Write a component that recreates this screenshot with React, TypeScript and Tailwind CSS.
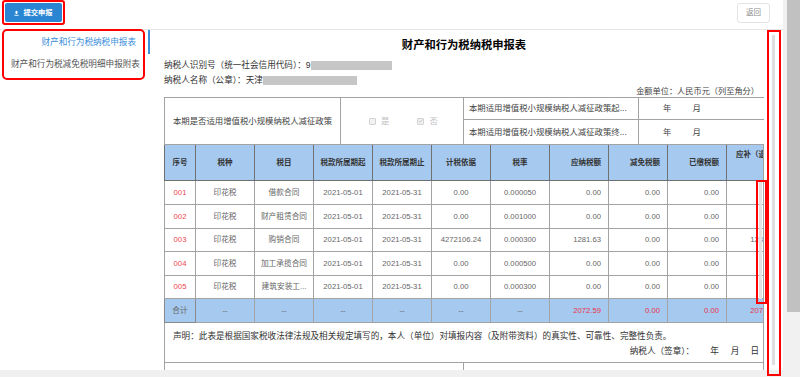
import React from 'react';

const F = "font-['Liberation_Sans','Noto_Sans_CJK_SC',sans-serif]";

type Row = { no: string; item: string; base: string; rate: string; due: string; sup: string };
const rows: Row[] = [
  { no: '001', item: '借款合同', base: '0.00', rate: '0.000050', due: '0.00', sup: '0.00' },
  { no: '002', item: '财产租赁合同', base: '0.00', rate: '0.001000', due: '0.00', sup: '0.00' },
  { no: '003', item: '购销合同', base: '4272106.24', rate: '0.000300', due: '1281.63', sup: '1281.63' },
  { no: '004', item: '加工承揽合同', base: '0.00', rate: '0.000500', due: '0.00', sup: '0.00' },
  { no: '005', item: '建筑安装工...', base: '0.00', rate: '0.000300', due: '0.00', sup: '0.00' },
];
const rowH = ['h-[24px]', 'h-[24px]', 'h-[23px]', 'h-[24px]', 'h-[23px]'];

function C({ children, className = '' }: { children?: React.ReactNode; className?: string }) {
  return (
    <div className={`w-[59px] shrink-0 border-r border-b border-[#a3a3a3] flex items-center justify-center whitespace-nowrap overflow-hidden ${className}`}>
      {children}
    </div>
  );
}
function R({ children, className = '' }: { children?: React.ReactNode; className?: string }) {
  return (
    <div className={`w-[59px] shrink-0 border-r border-b border-[#a3a3a3] flex items-center justify-end pr-[7px] whitespace-nowrap ${className}`}>
      {children}
    </div>
  );
}
function H({ children, className = '' }: { children?: React.ReactNode; className?: string }) {
  return (
    <div className={`w-[59px] shrink-0 border-r border-b border-[#707070] flex items-center justify-center whitespace-nowrap font-bold ${className}`}>
      {children}
    </div>
  );
}

function Box({ checked, label }: { checked?: boolean; label: string }) {
  return (
    <span className="flex items-center gap-[5px]">
      <span className="w-[7px] h-[7px] border border-[#d3d3d3] bg-[#f2f2f2] rounded-[1px] flex items-center justify-center">
        {checked && (
          <svg width="6" height="6" viewBox="0 0 6 6">
            <path d="M1 3 L2.5 4.5 L5 1.5" stroke="#b5b5b5" strokeWidth="0.9" fill="none" />
          </svg>
        )}
      </span>
      <span className="text-[#c0c0c0]">{label}</span>
    </span>
  );
}

export default function App() {
  return (
    <div className={`${F} w-[800px] h-[377px] relative overflow-hidden flex bg-white text-[#333]`}>
      {/* main column */}
      <div className="w-[783px] h-full flex flex-col">
        {/* top bar */}
        <div className="h-[30px] shrink-0 border-b border-[#e6e6e6] flex items-start justify-between">
          <button className="ml-[5px] mt-[3px] w-[57px] h-[19px] bg-[#2a86d3] rounded-[2px] flex items-center justify-center gap-[4px] text-white text-[7.3px] font-bold leading-none">
            <svg width="5" height="6" viewBox="0 0 5 6">
              <path d="M2.5 0.6 L0.6 2.6 H1.8 V4 H3.2 V2.6 H4.4 Z" fill="white" />
              <rect x="0.4" y="4.8" width="4.2" height="0.9" fill="white" />
            </svg>
            <span>提交申报</span>
          </button>
          <button className="mr-[13px] mt-[3px] w-[33px] h-[20px] border border-[#e3e3e3] rounded-[3px] text-[#8a8a8a] text-[7.5px] leading-none flex items-center justify-center">
            返回
          </button>
        </div>

        {/* body */}
        <div className="flex-1 flex min-h-0">
          {/* sidebar */}
          <div className="w-[150px] shrink-0 flex flex-col text-[8.6px] leading-none">
            <div className="h-[24px] flex items-center justify-end pr-[12px] text-[#3b8fdb] border-r-2 border-[#3b8fdb]">
              财产和行为税纳税申报表
            </div>
            <div className="h-[20px] flex items-center pl-[11px] text-[#555] whitespace-nowrap">
              财产和行为税减免税明细申报附表
            </div>
          </div>

          {/* content */}
          <div className="flex-1 pl-[14px] flex flex-col overflow-hidden relative">
            <div className="w-[600px] flex flex-col">
              <div className="mt-[7px] h-[16px] leading-[16px] text-center text-[11.3px] font-bold text-black font-['Liberation_Serif','Noto_Sans_CJK_SC',serif]">
                财产和行为税纳税申报表
              </div>
              <div className="mt-[5px] h-[15px] flex items-center text-[8.6px] leading-none text-[#333]">
                <span>纳税人识别号（统一社会信用代码）：9</span>
                <span className="inline-block w-[81px] h-[9px] bg-[#c6c6c6]" />
              </div>
              <div className="h-[14px] flex items-center text-[8.6px] leading-none text-[#333]">
                <span>纳税人名称（公章）：天津</span>
                <span className="inline-block w-[94px] h-[9px] bg-[#c6c6c6]" />
              </div>
              <div className="h-[10px] flex items-center justify-end pr-[5px] text-[8.2px] leading-none text-[#444]">
                金额单位：人民币元（列至角分）
              </div>

              {/* policy section */}
              <div className="flex h-[48px] border-t border-l border-[#a3a3a3] text-[8.4px] leading-none text-[#444]">
                <div className="w-[176px] shrink-0 border-r border-b border-[#a3a3a3] flex items-center pl-[8px] whitespace-nowrap">
                  本期是否适用增值税小规模纳税人减征政策
                </div>
                <div className="w-[123px] shrink-0 border-r border-b border-[#a3a3a3] flex items-center pl-[28px] gap-[28px]">
                  <Box label="是" />
                  <Box checked label="否" />
                </div>
                <div className="w-[175px] shrink-0 flex flex-col">
                  <div className="h-[22px] border-r border-b border-[#a3a3a3] flex items-center pl-[5px] whitespace-nowrap">
                    本期适用增值税小规模纳税人减征政策起...
                  </div>
                  <div className="flex-1 border-r border-b border-[#a3a3a3] flex items-center pl-[5px] whitespace-nowrap">
                    本期适用增值税小规模纳税人减征政策终...
                  </div>
                </div>
                <div className="w-[125px] shrink-0 flex flex-col">
                  <div className="h-[22px] border-b border-[#a3a3a3] flex items-center pl-[24px] gap-[21px]">
                    <span>年</span>
                    <span>月</span>
                  </div>
                  <div className="flex-1 border-b border-[#a3a3a3] flex items-center pl-[24px] gap-[21px]">
                    <span>年</span>
                    <span>月</span>
                  </div>
                </div>
              </div>

              {/* data table */}
              <div className="w-[600px] overflow-hidden border-r border-[#a3a3a3] relative">
                <div className="w-[622px] flex flex-col text-[7.7px] leading-none text-[#666]">
                  {/* header */}
                  <div className="flex h-[36px] bg-[#a6c9ef] text-[7.5px] text-[#333]">
                    <div className="w-[32px] shrink-0 border-l border-r border-b border-[#707070] flex items-center justify-center font-bold">序号</div>
                    <H>税种</H>
                    <H>税目</H>
                    <H>税款所属期起</H>
                    <H>税款所属期止</H>
                    <H>计税依据</H>
                    <H>税率</H>
                    <H className="justify-end pr-[7px]">应纳税额</H>
                    <H className="justify-end pr-[7px]">减免税额</H>
                    <H className="justify-end pr-[7px]">已缴税额</H>
                    <div className="w-[59px] shrink-0 border-r border-b border-[#707070] pl-[9px] pt-[6px] font-bold whitespace-nowrap">应补（退）税额</div>
                  </div>
                  {rows.map((r, i) => (
                    <div key={r.no} className={`flex ${rowH[i]}`}>
                      <div className="w-[32px] shrink-0 border-l border-r border-b border-[#a3a3a3] flex items-center justify-center text-[#f0484c]">{r.no}</div>
                      <C>印花税</C>
                      <C>{r.item}</C>
                      <C>2021-05-01</C>
                      <C>2021-05-31</C>
                      <C>{r.base}</C>
                      <C>{r.rate}</C>
                      <R>{r.due}</R>
                      <R>0.00</R>
                      <R>0.00</R>
                      <R>{r.sup}</R>
                    </div>
                  ))}
                  {/* total */}
                  <div className="flex h-[24px] bg-[#a6c9ef]">
                    <div className="w-[32px] shrink-0 border-l border-r border-b border-[#8a8a8a] flex items-center justify-center">合计</div>
                    <C className="border-[#8a8a8a]">--</C>
                    <C className="border-[#8a8a8a]">--</C>
                    <C className="border-[#8a8a8a]">--</C>
                    <C className="border-[#8a8a8a]">--</C>
                    <C className="border-[#8a8a8a]">--</C>
                    <C className="border-[#8a8a8a]">--</C>
                    <R className="border-[#8a8a8a] text-[#e8334a]">2072.59</R>
                    <R className="border-[#8a8a8a] text-[#e8334a]">0.00</R>
                    <R className="border-[#8a8a8a] text-[#e8334a]">0.00</R>
                    <R className="border-[#8a8a8a] text-[#e8334a]">2072.59</R>
                  </div>
                  {/* declaration */}
                  <div className="w-[599px] h-[40px] border-l border-b border-[#a3a3a3] pl-[8px] pr-[4px] pt-[7px] text-[8.6px] text-[#333] flex flex-col">
                    <div className="h-[12px] leading-[12px] whitespace-nowrap">
                      声明：此表是根据国家税收法律法规及相关规定填写的，本人（单位）对填报内容（及附带资料）的真实性、可靠性、完整性负责。
                    </div>
                    <div className="mt-[3px] h-[12px] leading-[12px] flex justify-end whitespace-nowrap">
                      <span>纳税人（签章）：</span>
                      <span className="ml-[16px]">年</span>
                      <span className="ml-[12px]">月</span>
                      <span className="ml-[11px]">日</span>
                    </div>
                  </div>
                  <div className="flex h-[20px]">
                    <div className="w-[300px] shrink-0 border-l border-r border-[#a3a3a3]" />
                  </div>
                </div>
                {/* table inner scrollbar */}
                <div className="absolute left-[595px] top-[37px] w-[3px] h-[117px] bg-[#e2e2e2]" />
              </div>
            </div>
            {/* content thin scrollbar */}
            <div className="absolute left-[622px] top-[5px] w-[3px] h-[330px] bg-[#dedede]" />
          </div>
        </div>
        {/* bottom strip */}
        <div className="h-[7px] shrink-0 bg-[#f0f0f0]" />
      </div>

      {/* outer scrollbar */}
      <div className="w-[17px] h-full bg-[#f1f1f1] relative">
        <div className="absolute left-[4px] top-0 w-[13px] h-[312px] bg-[#c1c1c1]" />
      </div>

      {/* red annotation boxes */}
      <div className="absolute left-[2px] top-0 w-[63px] h-[25px] border-2 border-[#ff0000] rounded-[3px] pointer-events-none" />
      <div className="absolute left-[2px] top-[29px] w-[143px] h-[51px] border-2 border-[#ff0000] rounded-[5px] pointer-events-none" />
      <div className="absolute left-[767px] top-[30px] w-[14px] h-[346px] border-2 border-[#ff0000] pointer-events-none" />
      <div className="absolute left-[756px] top-[180px] w-[11px] h-[124px] border-2 border-[#ff0000] pointer-events-none" />
    </div>
  );
}
